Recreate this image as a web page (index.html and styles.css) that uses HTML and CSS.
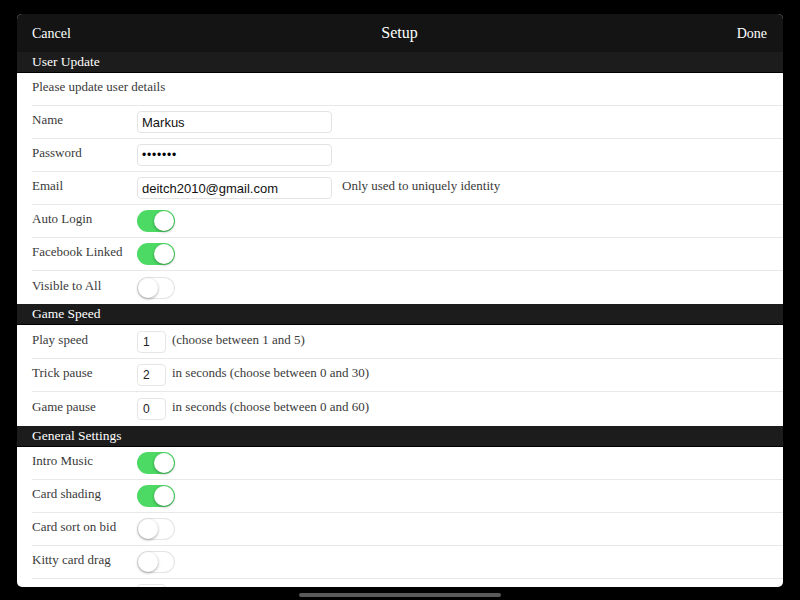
FILE: index.html
```html
<!DOCTYPE html>
<html>
<head>
<meta charset="utf-8">
<link rel="stylesheet" href="styles.css">
</head>
<body>
<div class="panel">
  <div class="navbar">
    <span class="nav-btn">Cancel</span>
    <span class="nav-title">Setup</span>
    <span class="nav-btn">Done</span>
  </div>

  <div class="section-head">User Update</div>
  <div class="row"><div class="row-inner"><span class="label wide">Please update user details</span></div></div>
  <div class="row"><div class="row-inner"><span class="label">Name</span><span class="field">Markus</span></div></div>
  <div class="row"><div class="row-inner"><span class="label">Password</span><span class="field dots">&#8226;&#8226;&#8226;&#8226;&#8226;&#8226;&#8226;</span></div></div>
  <div class="row"><div class="row-inner"><span class="label">Email</span><span class="field">deitch2010@gmail.com</span><span class="hint far">Only used to uniquely identity</span></div></div>
  <div class="row"><div class="row-inner"><span class="label">Auto Login</span><span class="toggle on"><span class="knob"></span></span></div></div>
  <div class="row"><div class="row-inner"><span class="label">Facebook Linked</span><span class="toggle on"><span class="knob"></span></span></div></div>
  <div class="row"><div class="row-inner last"><span class="label">Visible to All</span><span class="toggle"><span class="knob"></span></span></div></div>

  <div class="section-head">Game Speed</div>
  <div class="row tall"><div class="row-inner"><span class="label">Play speed</span><span class="num">1</span><span class="hint">(choose between 1 and 5)</span></div></div>
  <div class="row"><div class="row-inner"><span class="label">Trick pause</span><span class="num">2</span><span class="hint">in seconds (choose between 0 and 30)</span></div></div>
  <div class="row tall"><div class="row-inner last"><span class="label">Game pause</span><span class="num">0</span><span class="hint">in seconds (choose between 0 and 60)</span></div></div>

  <div class="section-head">General Settings</div>
  <div class="row"><div class="row-inner"><span class="label">Intro Music</span><span class="toggle on"><span class="knob"></span></span></div></div>
  <div class="row"><div class="row-inner"><span class="label">Card shading</span><span class="toggle on"><span class="knob"></span></span></div></div>
  <div class="row"><div class="row-inner"><span class="label">Card sort on bid</span><span class="toggle"><span class="knob"></span></span></div></div>
  <div class="row"><div class="row-inner"><span class="label">Kitty card drag</span><span class="toggle"><span class="knob"></span></span></div></div>
  <div class="row"><div class="row-inner"><span class="label"></span><span class="num"></span></div></div>
</div>
<div class="home-bar"></div>
</body>
</html>
```

FILE: styles.css
```css
* { box-sizing: border-box; }

html, body {
  margin: 0;
  padding: 0;
  background: #000;
  height: 600px;
  overflow: hidden;
}

body {
  font-family: "Liberation Serif", serif;
  color: #333;
}

.panel {
  margin: 14px 17px 0;
  height: 573px;
  border-radius: 5px;
  overflow: hidden;
  background: #fff;
  display: flex;
  flex-direction: column;
}

.navbar {
  flex: 0 0 38px;
  background: #141414;
  display: flex;
  align-items: center;
  justify-content: space-between;
  padding: 2px 16px 0 15px;
  color: #fff;
}

.nav-btn {
  font-size: 14px;
  width: 60px;
}
.nav-btn:last-child { text-align: right; }

.nav-title {
  font-size: 16px;
  margin-top: -3px;
}

.section-head {
  flex: 0 0 21px;
  background: #1c1c1c;
  border-bottom: 1px solid #000;
  color: #fff;
  font-size: 13.5px;
  padding-left: 15px;
  display: flex;
  align-items: center;
}

.row {
  flex: 0 0 33px;
  padding-left: 15px;
  display: flex;
}
.row.tall { flex-basis: 34px; }

.row-inner {
  flex: 1;
  display: flex;
  align-items: center;
  border-bottom: 1px solid #e8e8e8;
}
.row-inner.last { border-bottom: none; }

.label {
  width: 105px;
  font-size: 13px;
  color: #3a3a3a;
  padding-bottom: 4px;
  white-space: nowrap;
}
.label.wide { width: auto; }

.field {
  width: 195px;
  height: 22px;
  border: 1px solid #e3e3e3;
  border-radius: 4px;
  padding-left: 4px;
  font-family: "Liberation Sans", Arial, sans-serif;
  font-size: 13px;
  color: #111;
  display: flex;
  align-items: center;
}
.field.dots {
  font-size: 12px;
  letter-spacing: 0.8px;
  color: #000;
}

.num {
  width: 29px;
  height: 22px;
  border: 1px solid #e6e6e6;
  border-radius: 4px;
  padding-left: 5px;
  font-family: "Liberation Sans", Arial, sans-serif;
  font-size: 12px;
  color: #222;
  display: flex;
  align-items: center;
}

.hint {
  font-size: 13px;
  color: #3a3a3a;
  margin-left: 6px;
  padding-bottom: 4px;
  white-space: nowrap;
}
.hint.far { margin-left: 10px; }

.toggle {
  position: relative;
  width: 38px;
  height: 22px;
  border-radius: 11px;
  background: #fff;
  box-shadow: inset 0 0 0 1px #e4e4e4;
}
.toggle.on {
  background: #4cd964;
  box-shadow: none;
}
.knob {
  position: absolute;
  top: 1px;
  left: 1px;
  width: 20px;
  height: 20px;
  border-radius: 50%;
  background: #fff;
  box-shadow: 0 1px 3px rgba(0,0,0,0.35);
}
.toggle.on .knob { left: 17px; }

.home-bar {
  width: 202px;
  height: 4px;
  margin: 6px auto 0;
  border-radius: 2px;
  background: #5a5a5a;
}
```
